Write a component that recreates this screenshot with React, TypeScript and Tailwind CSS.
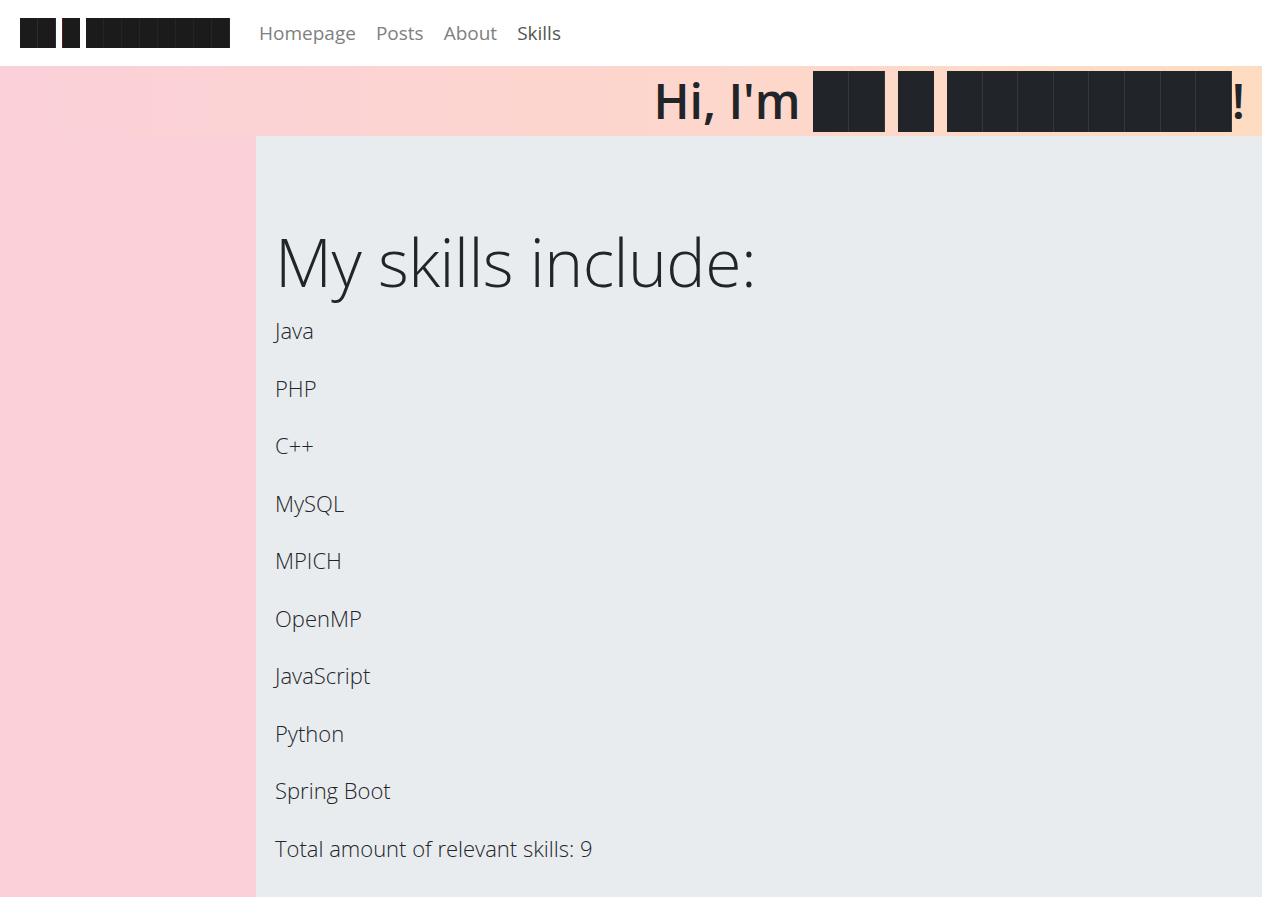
import React from "react";

const font = { fontFamily: '"Open Sans", "Noto Sans", sans-serif' };

function Cells({ n, w, h, cls }: { n: number; w: number; h: number; cls: string }) {
  return (
    <span className="inline-flex">
      {Array.from({ length: n }).map((_, i) => (
        <span
          key={i}
          className={cls}
          style={{ width: w, height: h }}
        />
      ))}
    </span>
  );
}

export default function App() {
  const skills = [
    "Java",
    "PHP",
    "C++",
    "MySQL",
    "MPICH",
    "OpenMP",
    "JavaScript",
    "Python",
    "Spring Boot",
  ];
  return (
    <div className="min-h-[897px] w-full overflow-hidden" style={font}>
      <nav className="h-[66px] bg-white flex items-center pl-[20px]">
        <div className="flex items-center gap-[6px] h-[30px]">
          <Cells n={2} w={18} h={30} cls="bg-[#1b1b1b] border-r border-[#2a2a3a]" />
          <Cells n={1} w={18} h={30} cls="bg-[#1b1b1b] border-l border-[#5a1a1a]" />
          <Cells n={8} w={18} h={30} cls="bg-[#1b1b1b] border-r border-[#1e2a1e]" />
        </div>
        <div className="flex items-center gap-[20px] ml-[29px] text-[19px] leading-none pt-[1px]">
          <span className="text-[#808080]">Homepage</span>
          <span className="text-[#808080]">Posts</span>
          <span className="text-[#808080]">About</span>
          <span className="text-[#555555]">Skills</span>
        </div>
      </nav>
      <div className="bg-gradient-to-r from-[#fbd0d9] to-[#fedcc1] min-h-[831px] flex flex-col">
        <div className="h-[70px] flex items-center justify-end pr-[17px]">
          <h1 className="text-[48px] font-semibold text-[#212529] leading-none flex items-center whitespace-nowrap">
            <span>Hi, I'm&nbsp;</span>
            <span className="inline-flex items-center gap-[13px]">
              <Cells n={2} w={36} h={61} cls="bg-[#212529] border-r border-[#33373c]" />
              <Cells n={1} w={36} h={61} cls="bg-[#212529]" />
              <Cells n={8} w={35.6} h={61} cls="bg-[#212529] border-r border-[#33373c]" />
            </span>
            <span>!</span>
          </h1>
        </div>
        <div className="flex flex-1">
          <div className="w-[256px] shrink-0 bg-[#fbd0d8]" />
          <main className="flex-1 bg-[#e9ecef] pl-[19px] pt-[92px] pb-[20px] text-[#212529]">
            <h2 className="text-[66px] font-light leading-[1] tracking-[-0.5px]">My skills include:</h2>
            <div className="mt-[21px] flex flex-col gap-[27.5px] font-light text-[22px] leading-[30px]">
              {skills.map((s) => (
                <p key={s}>{s}</p>
              ))}
              <p>Total amount of relevant skills: 9</p>
            </div>
          </main>
        </div>
      </div>
    </div>
  );
}
